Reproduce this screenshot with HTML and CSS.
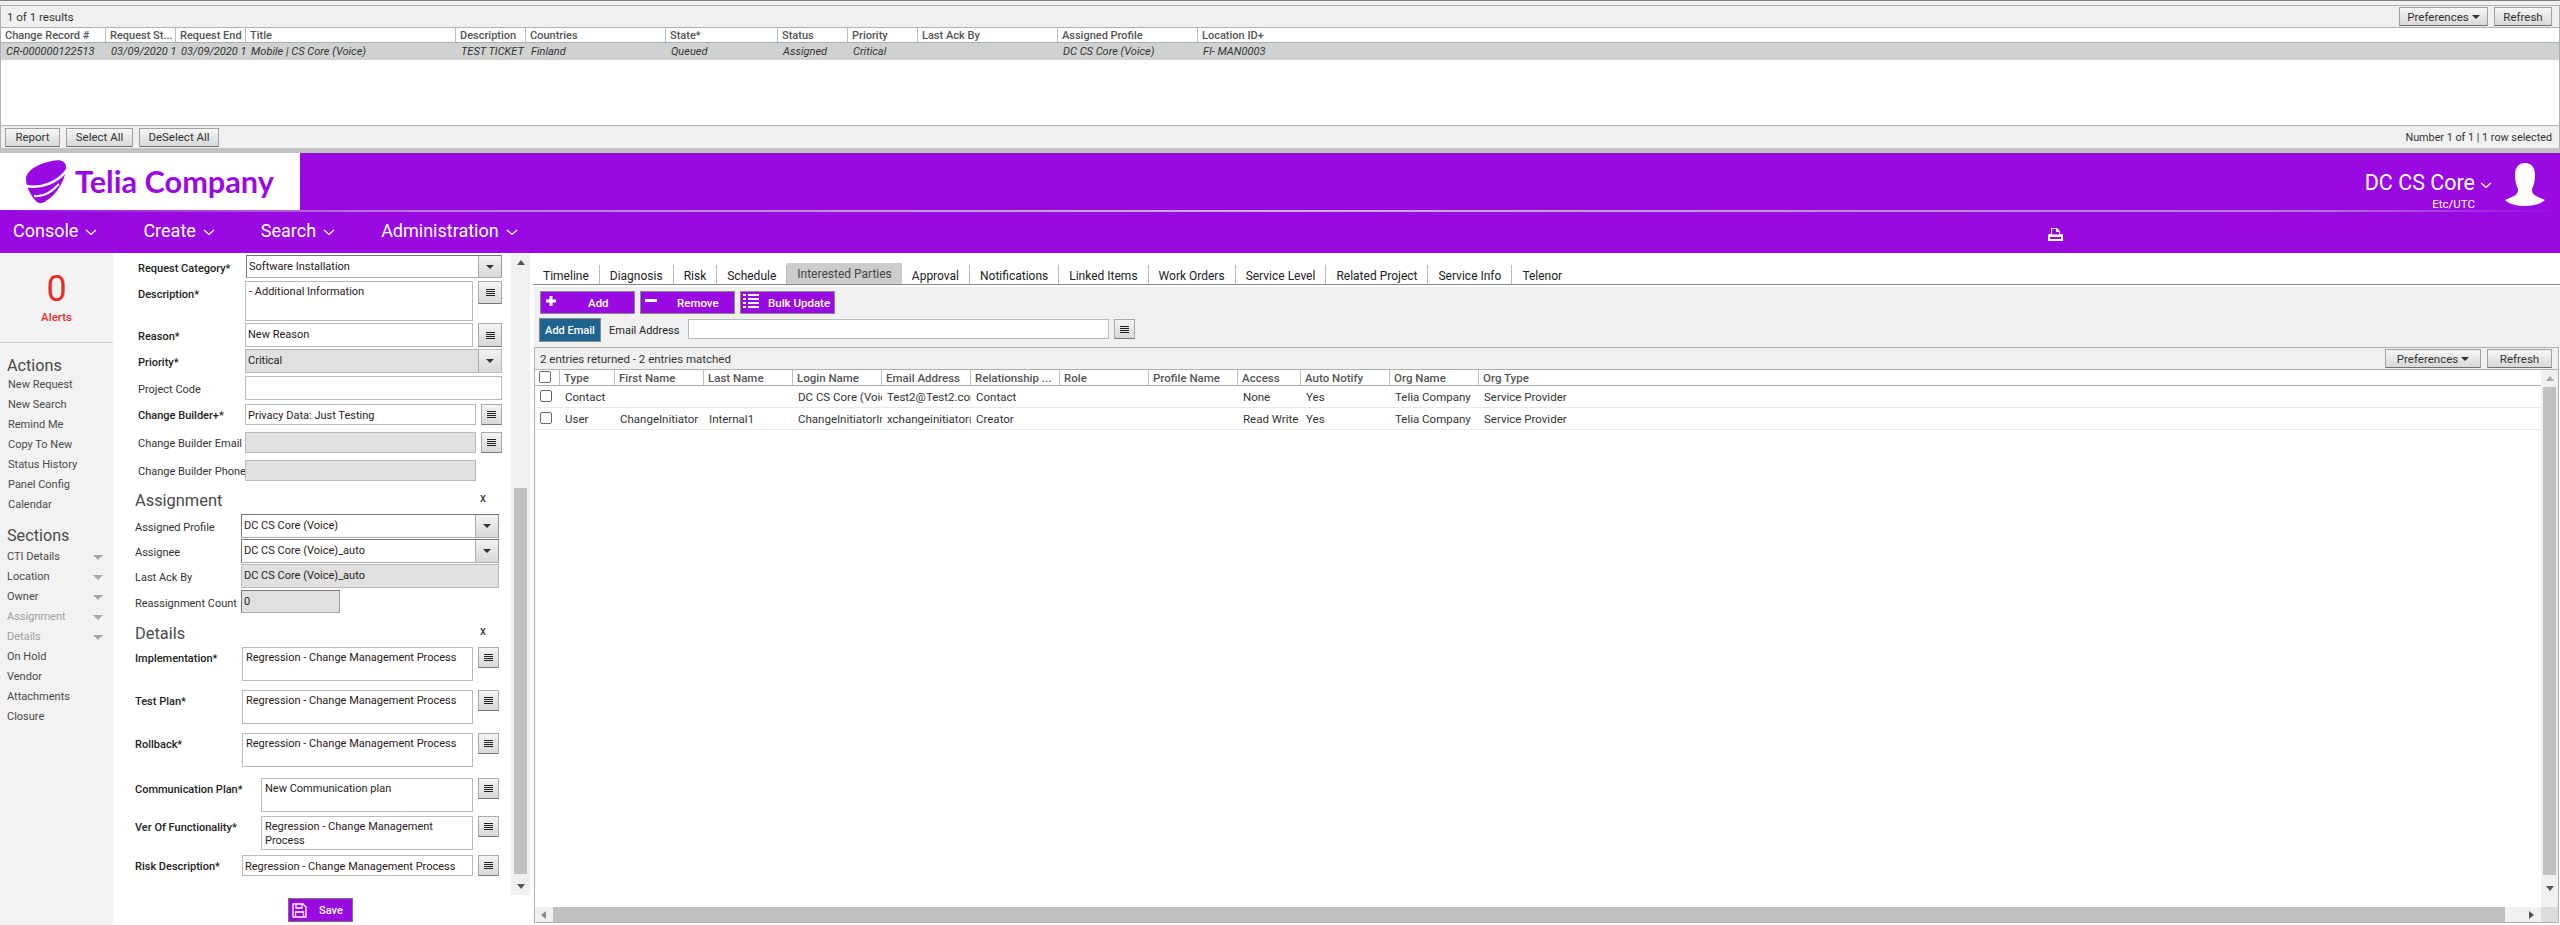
FILE: index.html
```html
<!DOCTYPE html>
<html lang="en">
<head>
    <meta charset="UTF-8">
    <title>Change Management Console</title>
    <link rel="stylesheet" href="styles.css">
</head>
<body>
    <div class="top-strip"></div>

    <!-- results table -->
    <section class="results">
        <div class="bar">
            <span>1 of 1 results</span>
            <div class="bar-btns">
                <button class="btn btn-pref">Preferences <i class="caret"></i></button>
                <button class="btn btn-refresh">Refresh</button>
            </div>
        </div>
        <div class="thead cols-top">
            <div>Change Record #</div><div>Request St...</div><div>Request End</div><div>Title</div><div>Description</div><div>Countries</div><div>State*</div><div>Status</div><div>Priority</div><div>Last Ack By</div><div>Assigned Profile</div><div>Location ID+</div>
        </div>
        <div class="tr-selected cols-top">
            <div>CR-000000122513</div><div>03/09/2020 12:00</div><div>03/09/2020 12:00</div><div>Mobile | CS Core (Voice)</div><div>TEST TICKET</div><div>Finland</div><div>Queued</div><div>Assigned</div><div>Critical</div><div></div><div>DC CS Core (Voice)</div><div>FI- MAN0003</div>
        </div>
        <div class="results-fill"></div>
        <div class="foot">
            <button class="btn btn-report">Report</button>
            <button class="btn btn-select">Select All</button>
            <button class="btn btn-deselect">DeSelect All</button>
            <span class="foot-note">Number 1 of 1 | 1 row selected</span>
        </div>
    </section>
    <div class="grey-strip"></div>

    <!-- brand header -->
    <header class="brand">
        <div class="logo">
            <svg class="globe" viewBox="0 0 40 44">
                <path fill="#990ae3" d="M26 1C34-1 40 1 40 7 40 18 32 34 20 41 16 44 12 44 9 40 4 34 0 26 0 19 0 10 14 3 26 1Z"/>
                <path fill="none" stroke="#fff" stroke-width="2.6" d="M0 26C16 29 32 22 41 10"/>
                <path fill="none" stroke="#fff" stroke-width="2" d="M8 36C16 37 25 33 33 24"/>
            </svg>
            <span class="logo-text">Telia Company</span>
        </div>
        <div class="user">
            <div class="user-name">
                <div class="user-main">DC CS Core <svg class="chev" viewBox="0 0 12 7"><path d="M1 1l5 4.5L11 1"/></svg></div>
                <div class="user-tz">Etc/UTC</div>
            </div>
            <svg class="avatar" viewBox="0 0 40 43">
                <path fill="#fff" d="M20 0c-7 0-10 5-10 12 0 5 1 10 3 14 0 4-1 5-4 7L0 37c4 4 12 6 20 6s16-2 20-6l-9-4c-3-2-4-3-4-7 2-4 3-9 3-14 0-7-3-12-10-12z"/>
            </svg>
        </div>
    </header>
    <div class="brand-line"></div>

    <nav class="nav">
        <a>Console <svg class="chev" viewBox="0 0 12 7"><path d="M1 1l5 4.5L11 1"/></svg></a>
        <a>Create <svg class="chev" viewBox="0 0 12 7"><path d="M1 1l5 4.5L11 1"/></svg></a>
        <a>Search <svg class="chev" viewBox="0 0 12 7"><path d="M1 1l5 4.5L11 1"/></svg></a>
        <a>Administration <svg class="chev" viewBox="0 0 12 7"><path d="M1 1l5 4.5L11 1"/></svg></a>
        <svg class="printer" viewBox="0 0 15 13">
            <path fill="#fff" d="M3 0h6l3 3v3h1.500q1.500 0 1.500 1.500V13H0V7.500Q0 6 1.500 6H3zM4 1v5.500h7V4H8V1zM2 9v2h11V9z"/>
        </svg>
    </nav>

    <main class="content">
        <!-- left menu -->
        <aside class="side">
            <div class="alerts">
                <div class="alert-count">0</div>
                <div class="alert-label">Alerts</div>
            </div>
            <h3 class="side-title">Actions</h3>
            <a class="side-link">New Request</a>
            <a class="side-link">New Search</a>
            <a class="side-link">Remind Me</a>
            <a class="side-link">Copy To New</a>
            <a class="side-link">Status History</a>
            <a class="side-link">Panel Config</a>
            <a class="side-link">Calendar</a>
            <h3 class="side-title sections">Sections</h3>
            <div class="section-list">
                <a class="side-sec">CTI Details <i class="sec-arrow"></i></a>
                <a class="side-sec">Location <i class="sec-arrow"></i></a>
                <a class="side-sec">Owner <i class="sec-arrow"></i></a>
                <a class="side-sec off">Assignment <i class="sec-arrow"></i></a>
                <a class="side-sec off">Details <i class="sec-arrow"></i></a>
                <a class="side-sec">On Hold</a>
                <a class="side-sec">Vendor</a>
                <a class="side-sec">Attachments</a>
                <a class="side-sec">Closure</a>
            </div>
        </aside>

        <!-- change form -->
        <div class="form">
            <div class="group first">
                <div class="row mt2"><label class="req lbl-a">Request Category*</label>
                    <div class="field dark w256 h23 ml1"><span>Software Installation</span><i class="drop"><i class="caret"></i></i></div></div>
                <div class="row mt3"><label class="req lbl-a">Description*</label>
                    <div class="field area w228 h40"><span>- Additional Information</span></div><button class="more b24 h23"><i class="lines"></i></button></div>
                <div class="row mt2"><label class="req lbl-a">Reason*</label>
                    <div class="field w228 h24"><span>New Reason</span></div><button class="more b24 h24"><i class="lines"></i></button></div>
                <div class="row mt2"><label class="req lbl-a">Priority*</label>
                    <div class="field off w257 h24"><span>Critical</span><i class="drop"><i class="caret"></i></i></div></div>
                <div class="row mt3"><label class="lbl-a">Project Code</label>
                    <div class="field w257 h24"></div></div>
                <div class="row mt4 short"><label class="req lbl-a">Change Builder+*</label>
                    <div class="field w231 h21"><span>Privacy Data: Just Testing</span></div><button class="more b21 h21"><i class="lines"></i></button></div>
                <div class="row mt7 short"><label class="lbl-a">Change Builder Email</label>
                    <div class="field off w231 h21"></div><button class="more b21 h21"><i class="lines"></i></button></div>
                <div class="row mt7 short"><label class="lbl-a">Change Builder Phone</label>
                    <div class="field off w231 h21"></div></div>
            </div>

            <div class="group">
                <div class="group-head assign"><h3>Assignment</h3><span class="close">x</span></div>
                <div class="row mt2"><label class="lbl-b">Assigned Profile</label>
                    <div class="field dark w258 h24"><span>DC CS Core (Voice)</span><i class="drop"><i class="caret"></i></i></div></div>
                <div class="row mt1"><label class="lbl-b">Assignee</label>
                    <div class="field dark w258 h24"><span>DC CS Core (Voice)_auto</span><i class="drop"><i class="caret"></i></i></div></div>
                <div class="row mt1"><label class="lbl-b">Last Ack By</label>
                    <div class="field off w258 h24"><span>DC CS Core (Voice)_auto</span></div></div>
                <div class="row mt2"><label class="lbl-b">Reassignment Count</label>
                    <div class="field off dark w99 h23"><span>0</span></div></div>
                <div class="group-head details"><h3>Details</h3><span class="close">x</span></div>
                <div class="row mt2 short"><label class="req lbl-c">Implementation*</label>
                    <div class="field area w231 h34"><span>Regression - Change Management Process</span></div><button class="more b21 h21"><i class="lines"></i></button></div>
                <div class="row mt9 short"><label class="req lbl-c">Test Plan*</label>
                    <div class="field area w231 h34"><span>Regression - Change Management Process</span></div><button class="more b21 h21"><i class="lines"></i></button></div>
                <div class="row mt9 short"><label class="req lbl-c">Rollback*</label>
                    <div class="field area w231 h34"><span>Regression - Change Management Process</span></div><button class="more b21 h21"><i class="lines"></i></button></div>
                <div class="row mt11 short"><label class="req lbl-d">Communication Plan*</label>
                    <div class="field area w212 h34"><span>New Communication plan</span></div><button class="more b21 h21"><i class="lines"></i></button></div>
                <div class="row mt4 short"><label class="req lbl-d">Ver Of Functionality*</label>
                    <div class="field area w212 h34 wrap"><span>Regression - Change Management Process</span></div><button class="more b21 h21"><i class="lines"></i></button></div>
                <div class="row mt5 short"><label class="req lbl-c">Risk Description*</label>
                    <div class="field w231 h21"><span>Regression - Change Management Process</span></div><button class="more b21 h21"><i class="lines"></i></button></div>
                <button class="save">
                    <svg class="save-icon" viewBox="0 0 15 15"><path fill="none" stroke="#fff" stroke-width="1.300" d="M1 1h10l3 3v10H1zM4 1v4h6V1M3.500 14V9h8v5"/></svg>
                    Save
                </button>
            </div>
        </div>

        <div class="form-scroll">
            <i class="arr-up"></i>
            <div class="form-thumb"></div>
            <i class="arr-down"></i>
        </div>

        <!-- tabs and parties grid -->
        <div class="detail">
            <div class="tabs">
                <a>Timeline</a><a>Diagnosis</a><a>Risk</a><a>Schedule</a><a class="active">Interested Parties</a><a>Approval</a><a>Notifications</a><a>Linked Items</a><a>Work Orders</a><a>Service Level</a><a>Related Project</a><a>Service Info</a><a>Telenor</a>
            </div>
            <div class="tools">
                <div class="tool-row">
                    <button class="tool">
                        <svg class="tool-icon i-plus" viewBox="0 0 10 10"><path fill="#fff" d="M3.500 0h3v3.500H10v3H6.500V10h-3V6.500H0v-3h3.500z"/></svg>
                        <span class="t-add">Add</span>
                    </button>
                    <button class="tool">
                        <svg class="tool-icon i-minus" viewBox="0 0 12 3"><path fill="#fff" d="M0 0h12v3H0z"/></svg>
                        <span class="t-remove">Remove</span>
                    </button>
                    <button class="tool">
                        <svg class="tool-icon i-list" viewBox="0 0 16 14"><path fill="#fff" d="M0 0h3v2H0zM5 0h11v2H5zM0 4h3v2H0zM5 4h11v2H5zM0 8h3v2H0zM5 8h11v2H5zM0 12h3v2H0zM5 12h11v2H5z"/></svg>
                        <span class="t-bulk">Bulk Update</span>
                    </button>
                </div>
                <div class="email-row">
                    <button class="add-email">Add Email</button>
                    <label class="email-label">Email Address</label>
                    <div class="field email-input"></div>
                    <button class="more b21 h20"><i class="lines"></i></button>
                </div>
            </div>

            <div class="grid">
                <div class="bar grid-bar">
                    <span>2 entries returned - 2 entries matched</span>
                    <div class="bar-btns">
                        <button class="btn btn-pref grid-pref">Preferences <i class="caret"></i></button>
                        <button class="btn grid-refresh">Refresh</button>
                    </div>
                </div>
                <div class="grid-body">
                    <div class="grid-main">
                        <div class="thead grid-head cols-grid">
                            <div><i class="check"></i></div><div>Type</div><div>First Name</div><div>Last Name</div><div>Login Name</div><div>Email Address</div><div>Relationship ...</div><div>Role</div><div>Profile Name</div><div>Access</div><div>Auto Notify</div><div>Org Name</div><div>Org Type</div>
                        </div>
                        <div class="grid-row cols-grid">
                            <div><i class="check"></i></div><div>Contact</div><div></div><div></div><div>DC CS Core (Voice)</div><div>Test2@Test2.com</div><div>Contact</div><div></div><div></div><div>None</div><div>Yes</div><div>Telia Company</div><div>Service Provider</div>
                        </div>
                        <div class="grid-row cols-grid">
                            <div><i class="check"></i></div><div>User</div><div>ChangeInitiator</div><div>Internal1</div><div>ChangeInitiatorInternal1</div><div>xchangeinitiator@test.com</div><div>Creator</div><div></div><div></div><div>Read Write</div><div>Yes</div><div>Telia Company</div><div>Service Provider</div>
                        </div>
                    </div>
                    <div class="grid-scroll">
                        <i class="arr-up"></i>
                        <div class="grid-thumb"></div>
                        <i class="arr-down"></i>
                    </div>
                </div>
                <div class="hbar">
                    <i class="arr-left"></i>
                    <div class="hbar-thumb"></div>
                    <i class="arr-right"></i>
                    <div class="hbar-corner"></div>
                </div>
            </div>
        </div>
    </main>
</body>
</html>
```

FILE: styles.css
```css
* {
    box-sizing: border-box;
}

html, body {
    margin: 0;
    height: 925px;
    overflow: hidden;
}

body {
    display: flex;
    flex-direction: column;
    background-color: #fff;
    color: #333;
    font-family: Roboto, "Liberation Sans", sans-serif;
    font-size: 11px;
}

i {
    display: block;
    font-style: normal;
}

button {
    font-family: inherit;
    padding: 0;
    cursor: pointer;
}

/* top results table */
.top-strip {
    height: 5px;
    background-color: #f0f0f0;
    border-top: 1px solid #808080;
}

.results {
    display: flex;
    flex-direction: column;
    height: 143px;
    border: 1px solid #aab2b8;
    border-width: 1px 1px 0;
}

.bar {
    display: flex;
    justify-content: space-between;
    align-items: center;
    height: 21px;
    padding: 0 7px 0 6px;
    background-color: #f0f0f0;
    font-size: 11.5px;
}

.bar-btns {
    display: flex;
    gap: 6px;
}

.btn {
    height: 19px;
    background: linear-gradient(#f6f6f6, #d8d8d8);
    border: 1px solid #a0a0a0;
    border-bottom-color: #707070;
    color: #333;
    font-size: 11.5px;
}

.btn-pref {
    display: flex;
    align-items: center;
    justify-content: center;
    gap: 3px;
    width: 89px;
}

.btn-refresh {
    width: 58px;
}

.caret {
    width: 0;
    height: 0;
    border: 4px solid transparent;
    border-top: 4px solid #333;
    border-bottom: 0;
}

.thead {
    display: grid;
    height: 16px;
    background-color: #fff;
    border-top: 1px solid #aab2b8;
    border-bottom: 1px solid #aab2b8;
    color: #555;
    font-weight: 500;
    line-height: 15px;
}

.thead > div {
    padding-left: 4px;
    border-right: 1px solid #b8bec2;
    overflow: hidden;
    white-space: nowrap;
}

.thead > div:last-child {
    border-right: 0;
}

.cols-top {
    grid-template-columns: 105px 70px 70px 210px 70px 140px 112px 70px 70px 140px 140px 1fr;
}

.tr-selected {
    display: grid;
    height: 17px;
    background-color: #d0d2d2;
    font-style: italic;
    line-height: 17px;
}

.tr-selected > div {
    padding-left: 5px;
    overflow: hidden;
    white-space: nowrap;
}

.results-fill {
    flex: 1;
    background-color: #fff;
}

.foot {
    display: flex;
    align-items: center;
    gap: 6px;
    height: 23px;
    padding: 0 7px 0 4px;
    background-color: #f0f0f0;
    border-top: 1px solid #aab2b8;
}

.btn-report { width: 55px; }
.btn-select { width: 67px; }
.btn-deselect { width: 80px; }

.foot-note {
    margin-left: auto;
    font-size: 10.8px;
}

.grey-strip {
    height: 5px;
    background-color: #c2c2c2;
}

/* brand header */
.brand {
    display: flex;
    justify-content: space-between;
    height: 57px;
    background-color: #990ae3;
}

.logo {
    display: flex;
    width: 300px;
    padding: 7px 0 0 26px;
    background-color: #fff;
}

.globe {
    width: 40px;
    height: 44px;
}

.logo-text {
    margin: 4px 0 0 9px;
    color: #990ae3;
    font-family: Lato, sans-serif;
    font-size: 30.7px;
    font-weight: 700;
    line-height: 36px;
}

.user {
    display: flex;
    padding: 10px 15px 0 0;
    color: #fff;
}

.user-name {
    margin-top: 8px;
    text-align: right;
}

.user-main {
    display: flex;
    align-items: center;
    gap: 5px;
    font-size: 21.5px;
    line-height: 24px;
}

.user-main .chev {
    margin-top: 4px;
}

.user-tz {
    margin: 3px 17px 0 0;
    font-size: 11.5px;
    line-height: 12px;
}

.avatar {
    width: 40px;
    height: 43px;
    margin-left: 13px;
}

.chev {
    width: 12px;
    height: 7px;
}

.chev path {
    fill: none;
    stroke: #fff;
    stroke-width: 1.3;
}

.brand-line {
    height: 2px;
    background: linear-gradient(90deg, #990ae3, #b878d6 15%, #c4b4cc 50%, #b878d6 90%, #990ae3);
}

.nav {
    display: flex;
    align-items: center;
    height: 41px;
    padding: 0 0 4px 13px;
    background-color: #990ae3;
    color: #fff;
    font-size: 18px;
}

.nav a {
    display: flex;
    align-items: center;
    gap: 7px;
    margin-right: 46px;
}

.nav .chev {
    margin-top: 4px;
}

.printer {
    width: 15px;
    height: 13px;
    margin: 8px 497px 0 auto;
}

/* main area */
.content {
    display: flex;
    flex: 1;
    min-height: 0;
}

.side {
    width: 113px;
    background-color: #f2f2f2;
    color: #4a4a4a;
}

.alerts {
    height: 90px;
    padding-top: 17px;
    border-bottom: 1px solid #ccc;
    color: #e4302a;
    text-align: center;
}

.alert-count {
    font-size: 36px;
    line-height: 38px;
}

.alert-label {
    margin-top: 2px;
    font-size: 11.5px;
    font-weight: 500;
}

.side-title {
    margin: 14px 0 0 7px;
    color: #4a4a4a;
    font-size: 16.2px;
    font-weight: 400;
    line-height: 18px;
}

.side-title.sections {
    margin-top: 12px;
}

.side-link {
    display: block;
    padding-left: 8px;
    line-height: 20px;
}

.section-list {
    margin-top: 2px;
}

.side-sec {
    display: flex;
    justify-content: space-between;
    align-items: center;
    padding: 0 10px 0 7px;
    line-height: 20px;
}

.side-sec.off {
    color: #a0a0a0;
}

.sec-arrow {
    border: 5px solid transparent;
    border-top: 5px solid #a8a8a8;
    border-bottom: 0;
}

.form {
    width: 398px;
    color: #333;
}

.group {
    padding-left: 22px;
}

.group.first {
    padding-left: 25px;
}

.row {
    display: flex;
    align-items: flex-start;
}

.row label {
    display: block;
    flex: none;
    padding-top: 7px;
    overflow: hidden;
    white-space: nowrap;
    line-height: 14px;
}

.row.short label {
    padding-top: 5px;
}

.row label.req {
    color: #222;
    font-weight: 500;
}

.lbl-a { width: 107px; padding-right: 5px; }
.lbl-b { width: 106px; }
.lbl-c { width: 107px; }
.lbl-d { width: 126px; }

.mt1 { margin-top: 1px; }
.mt2 { margin-top: 2px; }
.mt3 { margin-top: 3px; }
.mt4 { margin-top: 4px; }
.mt5 { margin-top: 5px; }
.mt7 { margin-top: 7px; }
.mt9 { margin-top: 9px; }
.mt11 { margin-top: 11px; }
.ml1 { margin-left: 1px; }

.w99 { width: 99px; }
.w212 { width: 212px; }
.w228 { width: 228px; }
.w231 { width: 231px; }
.w256 { width: 256px; }
.w257 { width: 257px; }
.w258 { width: 258px; }

.h20 { height: 20px; }
.h21 { height: 21px; }
.h23 { height: 23px; }
.h24 { height: 24px; }
.h34 { height: 34px; }
.h40 { height: 40px; }

.b21 { width: 21px; }
.b24 { width: 24px; }

.field {
    display: flex;
    flex: none;
    justify-content: space-between;
    position: relative;
    padding: 4px 0 0 2px;
    background-color: #fff;
    border: 1px solid #b4bcc0;
    color: #2b1a1a;
    line-height: 14px;
    overflow: hidden;
}

.field.area {
    padding: 3px 0 0 3px;
}

.field span {
    white-space: nowrap;
}

.field.wrap span {
    white-space: normal;
}

.field.dark {
    border-color: #777 #999 #aaa #777;
}

.field.off {
    background-color: #dfe0df;
}

.drop {
    display: flex;
    justify-content: center;
    align-items: center;
    flex: none;
    width: 23px;
    margin: -4px 0 0;
    background: linear-gradient(#f2f2f2, #d8d8d8);
    border-left: 1px solid #aaa;
}

.more {
    display: flex;
    justify-content: center;
    align-items: center;
    flex: none;
    margin-left: 5px;
    background: linear-gradient(#f4f4f4, #d8d8d8);
    border: 1px solid #aaa;
    border-bottom-color: #777;
}

.lines {
    width: 9px;
    height: 7px;
    background: repeating-linear-gradient(#222 0 1px, transparent 1px 2px);
}

.group-head {
    display: flex;
    justify-content: space-between;
    align-items: center;
    width: 351px;
    height: 24px;
}

.group-head.assign { margin-top: 7px; }
.group-head.details { margin-top: 8px; }

.group-head h3 {
    margin: 0;
    color: #4a4a4a;
    font-size: 16.4px;
    font-weight: 400;
}

.close {
    color: #222;
    font-size: 12px;
    margin-bottom: 4px;
}

.save {
    display: flex;
    align-items: center;
    gap: 12px;
    width: 65px;
    height: 24px;
    margin: 22px 0 0 153px;
    padding-left: 3px;
    background-color: #990ae3;
    border: 1px solid #777;
    color: #fff;
    font-size: 11px;
    font-weight: 500;
}

.save-icon {
    width: 15px;
    height: 15px;
}

.form-scroll {
    display: flex;
    flex-direction: column;
    align-items: center;
    flex: none;
    width: 19px;
    height: 642px;
    padding-top: 7px;
    background-color: #f0f0f0;
}

.form-thumb {
    flex: none;
    width: 13px;
    height: 386px;
    margin-top: 223px;
    background-color: #c0c0c0;
}

.form-scroll .arr-down {
    margin-top: 10px;
}

.arr-up {
    flex: none;
    border: 4px solid transparent;
    border-top: 0;
    border-bottom: 5px solid #555;
}

.arr-down {
    flex: none;
    border: 4px solid transparent;
    border-top: 5px solid #555;
    border-bottom: 0;
}

.arr-left {
    flex: none;
    border: 4px solid transparent;
    border-left: 0;
    border-right: 5px solid #8a8a8a;
}

.arr-right {
    flex: none;
    border: 4px solid transparent;
    border-right: 0;
    border-left: 5px solid #555;
}

/* right side tabs */
.detail {
    display: flex;
    flex: 1;
    flex-direction: column;
    min-width: 0;
    margin-left: 3px;
}

.tabs {
    display: flex;
    align-items: flex-end;
    flex: none;
    height: 32px;
    border-bottom: 1px solid #888;
    color: #222;
    font-size: 12px;
}

.tabs a {
    height: 19px;
    padding: 4px 10px 0;
    border-right: 1px solid #bbb;
    line-height: 14px;
}

.tabs a.active {
    height: 21px;
    padding: 4px 10px 0;
    background-color: #ccc;
    border-right: 0;
    color: #444;
}

.tabs a:last-child {
    border-right: 0;
}

.tools {
    flex: none;
    height: 60px;
    margin: 2px 0 0 1px;
    padding: 4px 0 0 5px;
    background-color: #f0f0f0;
}

.tool-row {
    display: flex;
    gap: 5px;
    height: 23px;
    margin-left: 1px;
}

.tool {
    display: flex;
    align-items: center;
    position: relative;
    width: 95px;
    height: 23px;
    background-color: #990ae3;
    border: 1px solid #888;
    color: #fff;
    font-size: 11.5px;
    font-weight: 500;
}

.tool span {
    margin-top: 1px;
}

.tool-icon { flex: none; }
.i-plus { width: 10px; height: 10px; margin: -4px 0 0 5px; }
.i-minus { width: 12px; height: 3px; margin: -5px 0 0 4px; }
.i-list { width: 16px; height: 14px; margin: -3px 0 0 2px; }
.t-add { margin-left: 32px; }
.t-remove { margin-left: 20px; }
.t-bulk { margin-left: 9px; }

.email-row {
    display: flex;
    align-items: flex-start;
    margin-top: 4px;
}

.add-email {
    width: 62px;
    height: 24px;
    background-color: #1f6491;
    border: 1px solid #888;
    color: #fff;
    font-size: 11px;
    font-weight: 500;
}

.email-label {
    width: 79px;
    margin-left: 8px;
    padding-top: 6px;
    color: #222;
}

.email-input {
    width: 421px;
    height: 20px;
    margin-top: 1px;
}

.email-row .more {
    margin-top: 1px;
}

.grid {
    display: flex;
    flex-direction: column;
    height: 576px;
    margin: 0 1px 0 1px;
    border: 1px solid #aab2b8;
}

.grid-bar {
    flex: none;
    padding: 0 6px 0 5px;
}

.grid-pref {
    width: 96px;
}

.grid-refresh {
    width: 65px;
}

.grid-body {
    display: flex;
    flex: 1;
    min-height: 0;
}

.grid-main {
    flex: 1;
    min-width: 0;
}

.grid-head {
    height: 17px;
    font-size: 11.5px;
    line-height: 17px;
}

.cols-grid {
    grid-template-columns: 25px 55px 89px 89px 89px 89px 89px 89px 89px 63px 89px 89px 1fr;
}

.check {
    width: 12px;
    height: 12px;
    margin-top: 1px;
    background-color: #fff;
    border: 1px solid #666;
    border-radius: 2px;
}

.grid-row {
    display: grid;
    height: 22px;
    border-bottom: 1px solid #e8e8e8;
    font-size: 11.5px;
    line-height: 23px;
}

.grid-row > div {
    padding-left: 5px;
    overflow: hidden;
    white-space: nowrap;
}

.grid-row .check {
    margin-top: 4px;
}

.grid-scroll {
    display: flex;
    flex-direction: column;
    align-items: center;
    flex: none;
    width: 17px;
    padding-top: 6px;
    background-color: #f0f0f0;
    border-top: 1px solid #aab2b8;
}

.grid-scroll .arr-up {
    border-bottom-color: #aaa;
}

.grid-thumb {
    flex: none;
    width: 13px;
    height: 488px;
    margin-top: 6px;
    background-color: #c0c0c0;
}

.grid-scroll .arr-down {
    margin-top: 11px;
}

.hbar {
    display: flex;
    align-items: center;
    flex: none;
    height: 15px;
    padding-left: 6px;
    background-color: #f0f0f0;
}

.hbar-thumb {
    flex: none;
    width: 1952px;
    height: 15px;
    margin-left: 7px;
    background-color: #c0c0c0;
}

.hbar .arr-right {
    margin-left: 24px;
}

.hbar-corner {
    flex: none;
    width: 17px;
    height: 15px;
    margin-left: auto;
    background-color: #dcdcdc;
}
```
